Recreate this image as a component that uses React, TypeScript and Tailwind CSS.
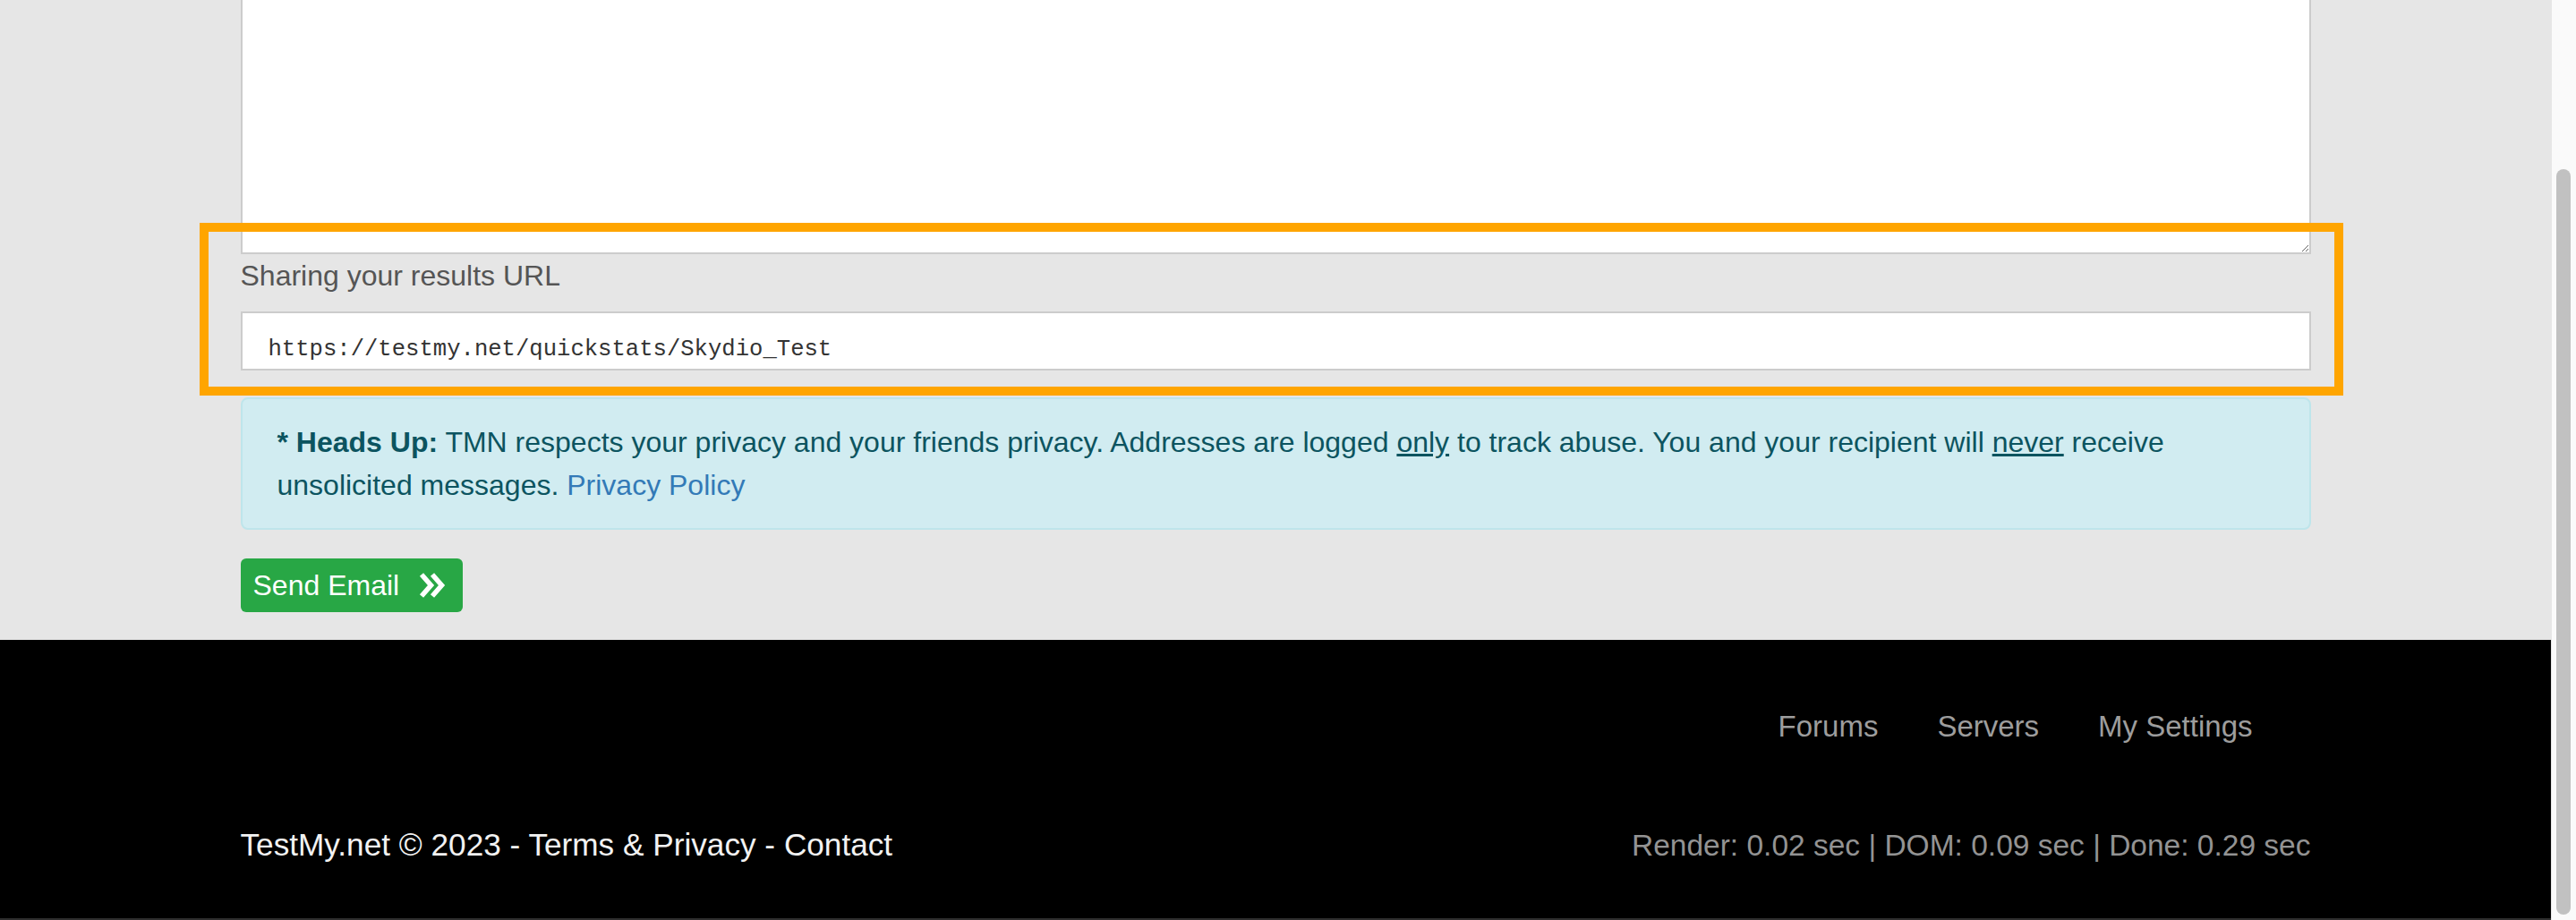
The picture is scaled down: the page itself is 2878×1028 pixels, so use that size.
export default function App() {
  return (
    <div className="relative flex w-[2878px] h-[1028px] overflow-hidden font-['Liberation_Sans',Arial,sans-serif]">
      <div className="flex-1 flex flex-col bg-[#e6e6e6]">
        {/* Share form */}
        <main className="w-[2313px] mx-auto pb-[31px]">
          <textarea
            readOnly
            className="block w-full h-[284px] border-2 border-t-0 border-[#cccccc] bg-white outline-none"
          />
          <label className="block text-[32px] leading-[48px] text-[#555555] mb-[16px]">
            Sharing your results URL
          </label>
          <div className="h-[66px] border-2 border-[#cccccc] bg-white pl-[29px] pt-[26px] font-['Liberation_Mono','Courier_New',monospace] text-[25.6px] leading-[30px] text-[#333333]">
            https://testmy.net/quickstats/Skydio_Test
          </div>

          <div className="mt-[30px] border-2 border-[#bee5eb] bg-[#d1ecf1] rounded-[8px] pl-[39px] pr-[40px] py-[24px] text-[32px] leading-[48px] text-[#0c5460]">
            <b>* Heads Up:</b> TMN respects your privacy and your friends privacy. Addresses are logged{" "}
            <a href="#" className="underline">only</a> to track abuse. You and your recipient will{" "}
            <a href="#" className="underline">never</a> receive unsolicited messages.{" "}
            <a href="#" className="text-[#337ab7]">Privacy Policy</a>
          </div>

          <button className="mt-[32px] flex items-center h-[60px] pl-[14px] pr-[19px] gap-[22px] rounded-[6px] bg-[#28a745] text-white text-[32px] leading-[48px]">
            Send Email
            <svg width="30" height="30" viewBox="0 0 30 30" fill="none" stroke="white" strokeWidth="5.5">
              <path d="M3 3 L13.5 15 L3 27" />
              <path d="M15 3 L25.5 15 L15 27" />
            </svg>
          </button>
        </main>

        {/* Footer */}
        <footer className="flex-1 flex flex-col bg-black">
          <div className="w-[2313px] mx-auto pt-[72px]">
            <nav className="flex justify-end gap-[66px] pr-[65px] text-[33px] leading-[50px] text-[#9d9d9d]">
              <a href="#">Forums</a>
              <a href="#">Servers</a>
              <a href="#">My Settings</a>
            </nav>
            <div className="mt-[81px] flex justify-between items-baseline leading-[52px]">
              <div className="text-[35.2px] text-[#f2f2f2]">
                TestMy.net © 2023 - <a href="#">Terms &amp; Privacy</a> - <a href="#">Contact</a>
              </div>
              <div className="text-[33.5px] text-[#939393]">
                Render: 0.02 sec | DOM: 0.09 sec | Done: 0.29 sec
              </div>
            </div>
          </div>
          <div className="mt-auto h-[2px] bg-[#2e2e2e]" />
        </footer>
      </div>

      {/* Scrollbar */}
      <div className="w-[28px] bg-[#fafafa] border-l border-[#e6e6e6]">
        <div className="ml-[5px] mt-[189px] w-[16px] h-[833px] rounded-full bg-[#c1c1c1]" />
      </div>

      {/* Highlight annotation */}
      <div className="absolute left-[223px] top-[249px] w-[2395px] h-[193px] border-[10px] border-[#ffa500] pointer-events-none" />
    </div>
  );
}
